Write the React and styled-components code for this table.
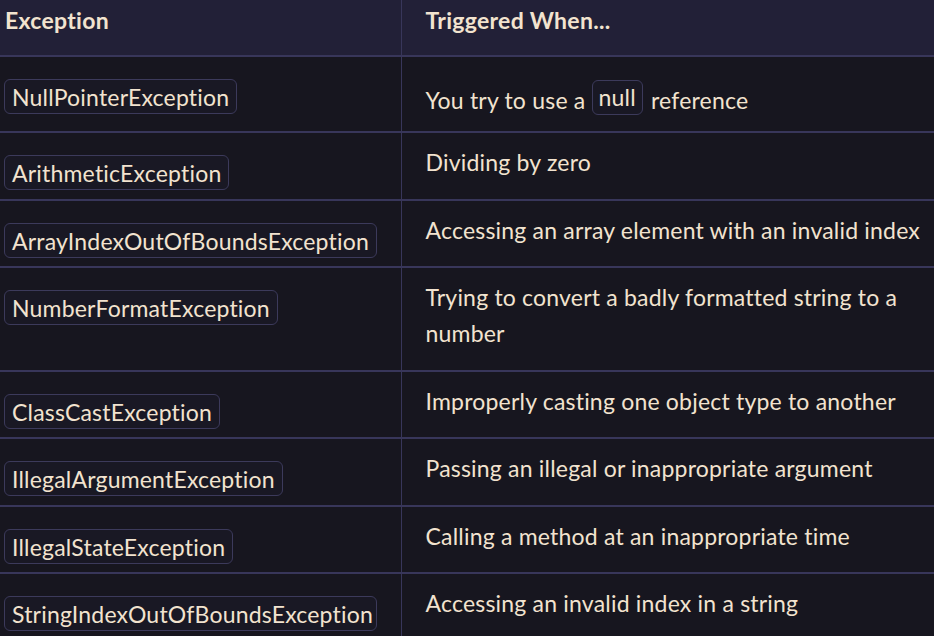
import React from 'react';
import styled, { createGlobalStyle } from 'styled-components';

const GlobalStyle = createGlobalStyle`
    html, body {
        margin: 0;
        padding: 0;
        background: #17161f;
        overflow: hidden;
    }
`;

const rows = [
    { name: 'NullPointerException', parts: ['You try to use a ', { code: 'null' }, ' reference'], tight: true },
    { name: 'ArithmeticException', parts: ['Dividing by zero'] },
    { name: 'ArrayIndexOutOfBoundsException', parts: ['Accessing an array element with an invalid index'] },
    { name: 'NumberFormatException', parts: ['Trying to convert a badly formatted string to a number'] },
    { name: 'ClassCastException', parts: ['Improperly casting one object type to another'] },
    { name: 'IllegalArgumentException', parts: ['Passing an illegal or inappropriate argument'] },
    { name: 'IllegalStateException', parts: ['Calling a method at an inappropriate time'] },
    { name: 'StringIndexOutOfBoundsException', parts: ['Accessing an invalid index in a string'] },
];

const App = () => {
    return (
        <>
            <GlobalStyle />
            <Wrap>
                <Table>
                    <colgroup>
                        <col style={{ width: 401 }} />
                        <col />
                    </colgroup>
                    <thead>
                        <tr>
                            <Th $first>Exception</Th>
                            <Th>Triggered When...</Th>
                        </tr>
                    </thead>
                    <tbody>
                        {rows.map((row) => (
                            <Row key={row.name}>
                                <NameCell>
                                    <Code>{row.name}</Code>
                                </NameCell>
                                <DescCell $tight={row.tight}>
                                    {row.parts.map((p, i) =>
                                        typeof p === 'string' ? (
                                            <React.Fragment key={i}>{p}</React.Fragment>
                                        ) : (
                                            <InlineCode key={i}>{p.code}</InlineCode>
                                        )
                                    )}
                                </DescCell>
                            </Row>
                        ))}
                    </tbody>
                </Table>
            </Wrap>
        </>
    );
};

export default App;

const Wrap = styled.div`
    width: 934px;
    height: 636px;
    overflow: hidden;
    background: #17161f;
`;

const Table = styled.table`
    width: 968px;
    table-layout: fixed;
    border-collapse: collapse;
    font-family: Lato, "Open Sans", sans-serif;
    font-size: 23px;
    letter-spacing: 0.2px;
    color: #f2e3cf;
`;

const Th = styled.th`
    background: #222037;
    text-align: left;
    font-weight: 700;
    letter-spacing: 0.3px;
    line-height: 36px;
    padding: 2px 24px 17px ${({ $first }) => ($first ? '5px' : '24px')};
    border-bottom: 2px solid #38365a;
    border-left: ${({ $first }) => ($first ? 'none' : '1px solid #38365a')};
`;

const Row = styled.tr`
    border-bottom: 2px solid #38365a;
`;

const NameCell = styled.td`
    vertical-align: top;
    line-height: 0;
    padding: 22px 24px 8.5px 4px;
`;

const DescCell = styled.td`
    vertical-align: top;
    line-height: 36px;
    padding: 11px 24px ${({ $tight }) => ($tight ? '13px' : '18.5px')};
    border-left: 1px solid #38365a;
`;

const Code = styled.span`
    display: inline-block;
    vertical-align: top;
    box-sizing: border-box;
    max-width: 100%;
    overflow: hidden;
    white-space: nowrap;
    line-height: 30px;
    padding: 2px 7px 1px;
    border: 1.5px solid #3c3a5b;
    border-radius: 6px;
    background: #191824;
`;

const InlineCode = styled.span`
    display: inline-block;
    vertical-align: 3px;
    line-height: 30px;
    margin: 12px 2px 0 0;
    padding: 1px 6px 2px;
    border: 1.5px solid #3c3a5b;
    border-radius: 6px;
    background: #191824;
`;
